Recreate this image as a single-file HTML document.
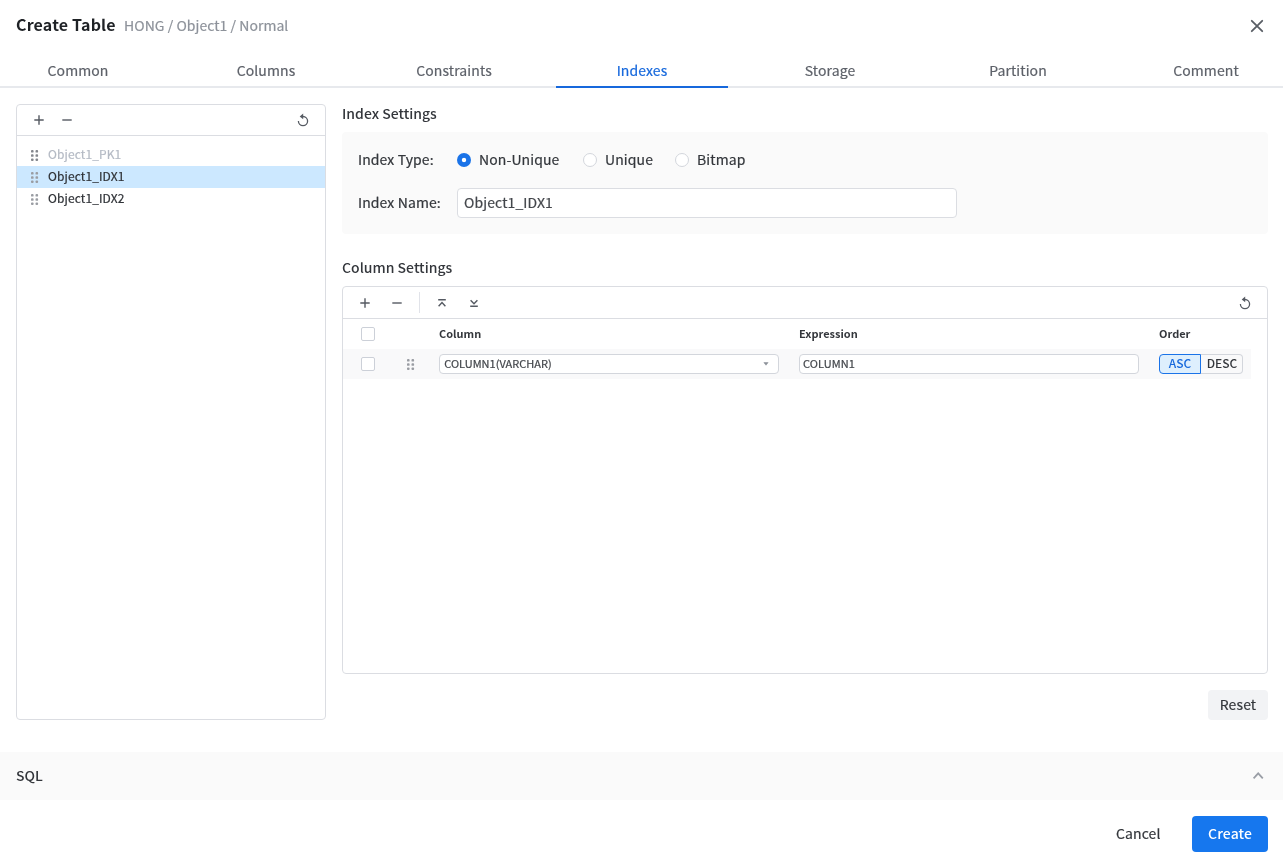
<!DOCTYPE html>
<html lang="en">
<head>
<meta charset="utf-8">
<title>Create Table</title>
<style>
*{box-sizing:border-box;margin:0;padding:0}
html,body{width:1283px;height:865px;overflow:hidden;background:#fff}
body{font-family:"Noto Sans CJK KR","Liberation Sans",sans-serif;color:#33363b;font-size:14px;font-weight:400;-webkit-text-stroke:.22px;letter-spacing:.1px;position:relative}
#root{position:absolute;left:0;top:0;width:1283px;height:865px;will-change:transform}
.abs{position:absolute}
.t{position:absolute;white-space:nowrap;line-height:20px;height:20px}
.s{display:inline-block;transform:scaleY(.95);transform-origin:50% 76%}
.t{transform:scaleY(.95);transform-origin:0 16px}
#title{left:16px;top:14px;font-size:16px;font-weight:700;color:#1f2226;letter-spacing:.17px;-webkit-text-stroke:0}
#sub{left:124px;top:15px;letter-spacing:.04px;font-size:14px;font-weight:400;color:#8d929a}
#tabs{left:0;top:54px;width:1283px;height:34px;border-bottom:2px solid #e7e9ed}
.tab{position:absolute;top:0;width:188px;height:34px;text-align:center;font-size:14px;line-height:33px;color:#5d6169}
.tab.on{color:#1668dc}
#ul{left:556px;top:86px;width:172px;height:2px;background:#1668dc}
#lp{left:16px;top:104px;width:310px;height:616px;border:1px solid #dbdde2;border-radius:4px}
#lpbar{left:0;top:0;width:308px;height:31px;border-bottom:1px solid #dbdde2}
.row{position:absolute;left:0;width:308px;height:22px;font-size:12px;line-height:20px;padding-left:31px;color:#2e3136;}
.row.sel{background:#cce8ff}
.row.dis{color:#b4bac4}
.h2{font-size:14px;font-weight:500;-webkit-text-stroke:0;letter-spacing:0;color:#33363b}
#box1{left:342px;top:132px;width:926px;height:102px;background:#fafafa;border-radius:4px}
.lbl{font-size:14px;color:#33363b}
.radio{position:absolute;width:14px;height:14px;border-radius:50%;border:1px solid #d3d6dc;background:#fff}
.radio.on{border:none;background:radial-gradient(circle at 50% 50%,#fff 0,#fff 1.8px,#1a73e8 2.6px,#1a73e8 100%)}
#inp{left:457px;top:188px;width:500px;height:30px;border:1px solid #dbdde2;border-radius:4px;background:#fff;font-size:14px;line-height:26px;padding-left:6px;color:#43464b}
#box2{left:342px;top:286px;width:926px;height:388px;border:1px solid #dbdde2;border-radius:4px}
#b2bar{left:0;top:0;width:924px;height:32px;border-bottom:1px solid #dbdde2}
.th{font-size:11px;font-weight:700;color:#33363b;-webkit-text-stroke:0;letter-spacing:0}
#drow{left:0;top:62px;width:908px;height:30px;background:#f9f9fa}
.cb{position:absolute;width:14px;height:14px;border:1px solid #ccd0d8;border-radius:2px;background:#fff}
.cell{position:absolute;height:20px;border:1px solid #d3d6dc;border-radius:4px;background:#fff;font-size:11px;font-weight:400;line-height:17px;padding-left:3.5px;color:#43464b}
.seg{position:absolute;top:67px;height:20px;font-size:12px;line-height:16px;text-align:center;font-weight:500;-webkit-text-stroke:0;letter-spacing:0}
#reset{left:1208px;top:690px;width:60px;height:30px;background:#f2f3f5;border-radius:4px;text-align:center;font-size:14px;line-height:29px;color:#33363b}
#sql{left:0;top:752px;width:1283px;height:48px;background:#fafafa}
#cancel{left:1116px;top:823px;font-size:14px;color:#33363b}
#create{left:1192px;top:816px;width:76px;height:36px;background:#1677ee;border-radius:4px;color:#fff;font-size:14px;font-weight:500;-webkit-text-stroke:0;text-align:center;line-height:35px}
svg{position:absolute;overflow:visible}
</style>
</head>
<body>
<div id="root">
<div class="t" id="title">Create Table</div>
<div class="t" id="sub">HONG / Object1 / Normal</div>
<svg style="left:1251px;top:20px" width="12" height="12" viewBox="0 0 12 12"><path d="M0.8 0.8 L11.2 11.2 M11.2 0.8 L0.8 11.2" stroke="#595e65" stroke-width="1.8" stroke-linecap="round" fill="none"/></svg>

<div class="abs" id="tabs">
  <div class="tab" style="left:-16px"><span class="s">Common</span></div>
  <div class="tab" style="left:172px"><span class="s">Columns</span></div>
  <div class="tab" style="left:360px"><span class="s">Constraints</span></div>
  <div class="tab on" style="left:548px"><span class="s">Indexes</span></div>
  <div class="tab" style="left:736px"><span class="s">Storage</span></div>
  <div class="tab" style="left:924px"><span class="s">Partition</span></div>
  <div class="tab" style="left:1112px"><span class="s">Comment</span></div>
</div>
<div class="abs" id="ul"></div>

<div class="abs" id="lp">
  <div class="abs" id="lpbar"></div>
  <div class="row dis" style="top:39px"><span class="s">Object1_PK1</span></div>
  <div class="row sel" style="top:61px"><span class="s">Object1_IDX1</span></div>
  <div class="row" style="top:83px"><span class="s">Object1_IDX2</span></div>
</div>

<div class="t h2" style="left:342px;top:103px">Index Settings</div>
<div class="abs" id="box1"></div>
<div class="t lbl" style="left:358px;top:149px">Index Type:</div>
<div class="radio on" style="left:457px;top:153px"></div>
<div class="t lbl" style="left:479px;top:149px">Non-Unique</div>
<div class="radio" style="left:583px;top:153px"></div>
<div class="t lbl" style="left:605px;top:149px">Unique</div>
<div class="radio" style="left:675px;top:153px"></div>
<div class="t lbl" style="left:697px;top:149px">Bitmap</div>
<div class="t lbl" style="left:358px;top:192px">Index Name:</div>
<div class="abs" id="inp"><span class="s">Object1_IDX1</span></div>

<div class="t h2" style="left:342px;top:257px">Column Settings</div>
<div class="abs" id="box2">
  <div class="abs" id="b2bar"></div>
  <div class="cb" style="left:18px;top:40px"></div>
  <div class="t th" style="left:96px;top:36px">Column</div>
  <div class="t th" style="left:456px;top:36px">Expression</div>
  <div class="t th" style="left:816px;top:36px">Order</div>
  <div class="abs" id="drow"></div>
  <div class="cb" style="left:18px;top:70px"></div>
  <div class="cell" style="left:96px;top:67px;width:340px;padding-left:4.3px;letter-spacing:0"><span class="s">COLUMN1(VARCHAR)</span></div>
  <div class="cell" style="left:456px;top:67px;width:340px;padding-left:3px"><span class="s">COLUMN1</span></div>
  <div class="seg" style="left:816px;width:42px;border:1px solid #1a73e8;border-radius:4px 0 0 4px;background:#deeffd;color:#1668dc"><span class="s">ASC</span></div>
  <div class="seg" style="left:858px;width:42px;border:1px solid #d3d6dc;border-left:none;border-radius:0 4px 4px 0;padding-left:1px;color:#33363b"><span class="s">DESC</span></div>
</div>

<div class="abs" id="reset"><span class="s">Reset</span></div>
<div class="abs" id="sql"></div>
<div class="t h2" style="left:16px;top:765px">SQL</div>
<div class="t" id="cancel">Cancel</div>
<div class="abs" id="create"><span class="s">Create</span></div>
<!-- left toolbar icons -->
<svg style="left:0;top:0" width="1283" height="865" viewBox="0 0 1283 865" fill="none" stroke="#555a62" stroke-width="1.4">
  <path d="M34.3 120H43.7M39 115.3V124.7"/>
  <path d="M62.3 120H71.7"/>
  <path d="M303 116.5A4.6 4.6 0 1 1 298.4 121.1" stroke-width="1.3"/>
  <path d="M299.7 116.4L303.2 113.5V119.3Z" fill="#555a62" stroke="none"/>
  <path d="M360.3 303H369.7M365 298.3V307.7"/>
  <path d="M392.3 303H401.7"/>
  <path d="M419.5 292V313" stroke="#e1e3e9" stroke-width="1"/>
  <path d="M438.2 299.8H445.8M438.6 306.2L442 302.6L445.4 306.2" stroke-width="1.4"/>
  <path d="M470.2 306.3H477.8M470.6 300.2L474 303.8L477.4 300.2" stroke-width="1.4"/>
  <path d="M1245 299.5A4.6 4.6 0 1 1 1240.4 304.1" stroke-width="1.3"/>
  <path d="M1241.7 299.4L1245.2 296.5V302.3Z" fill="#555a62" stroke="none"/>
  <path d="M763.9 362.6H768.1L766 365.2Z" fill="#8d929a" stroke="#8d929a" stroke-width="0.6" stroke-linejoin="round"/>
  <path d="M1253.6 778.3L1258.2 773.4L1262.8 778.3" stroke="#9a9ea6" stroke-width="1.8"/>
  <g fill="#84878d" stroke="none">
    <rect x="31" y="150" width="2.6" height="2.6" rx=".9"/><rect x="35.5" y="150" width="2.6" height="2.6" rx=".9"/>
    <rect x="31" y="154.2" width="2.6" height="2.6" rx=".9"/><rect x="35.5" y="154.2" width="2.6" height="2.6" rx=".9"/>
    <rect x="31" y="158.4" width="2.6" height="2.6" rx=".9"/><rect x="35.5" y="158.4" width="2.6" height="2.6" rx=".9"/>
  </g>
  <g fill="#9a9da3" stroke="none">
    <rect x="31" y="172" width="2.6" height="2.6" rx=".9"/><rect x="35.5" y="172" width="2.6" height="2.6" rx=".9"/>
    <rect x="31" y="176.2" width="2.6" height="2.6" rx=".9"/><rect x="35.5" y="176.2" width="2.6" height="2.6" rx=".9"/>
    <rect x="31" y="180.4" width="2.6" height="2.6" rx=".9"/><rect x="35.5" y="180.4" width="2.6" height="2.6" rx=".9"/>
    <rect x="31" y="194" width="2.6" height="2.6" rx=".9"/><rect x="35.5" y="194" width="2.6" height="2.6" rx=".9"/>
    <rect x="31" y="198.2" width="2.6" height="2.6" rx=".9"/><rect x="35.5" y="198.2" width="2.6" height="2.6" rx=".9"/>
    <rect x="31" y="202.4" width="2.6" height="2.6" rx=".9"/><rect x="35.5" y="202.4" width="2.6" height="2.6" rx=".9"/>
    <rect x="407" y="359" width="2.6" height="2.6" rx=".9"/><rect x="411.5" y="359" width="2.6" height="2.6" rx=".9"/>
    <rect x="407" y="363.2" width="2.6" height="2.6" rx=".9"/><rect x="411.5" y="363.2" width="2.6" height="2.6" rx=".9"/>
    <rect x="407" y="367.4" width="2.6" height="2.6" rx=".9"/><rect x="411.5" y="367.4" width="2.6" height="2.6" rx=".9"/>
  </g>
</svg>
</div>
</body>
</html>
